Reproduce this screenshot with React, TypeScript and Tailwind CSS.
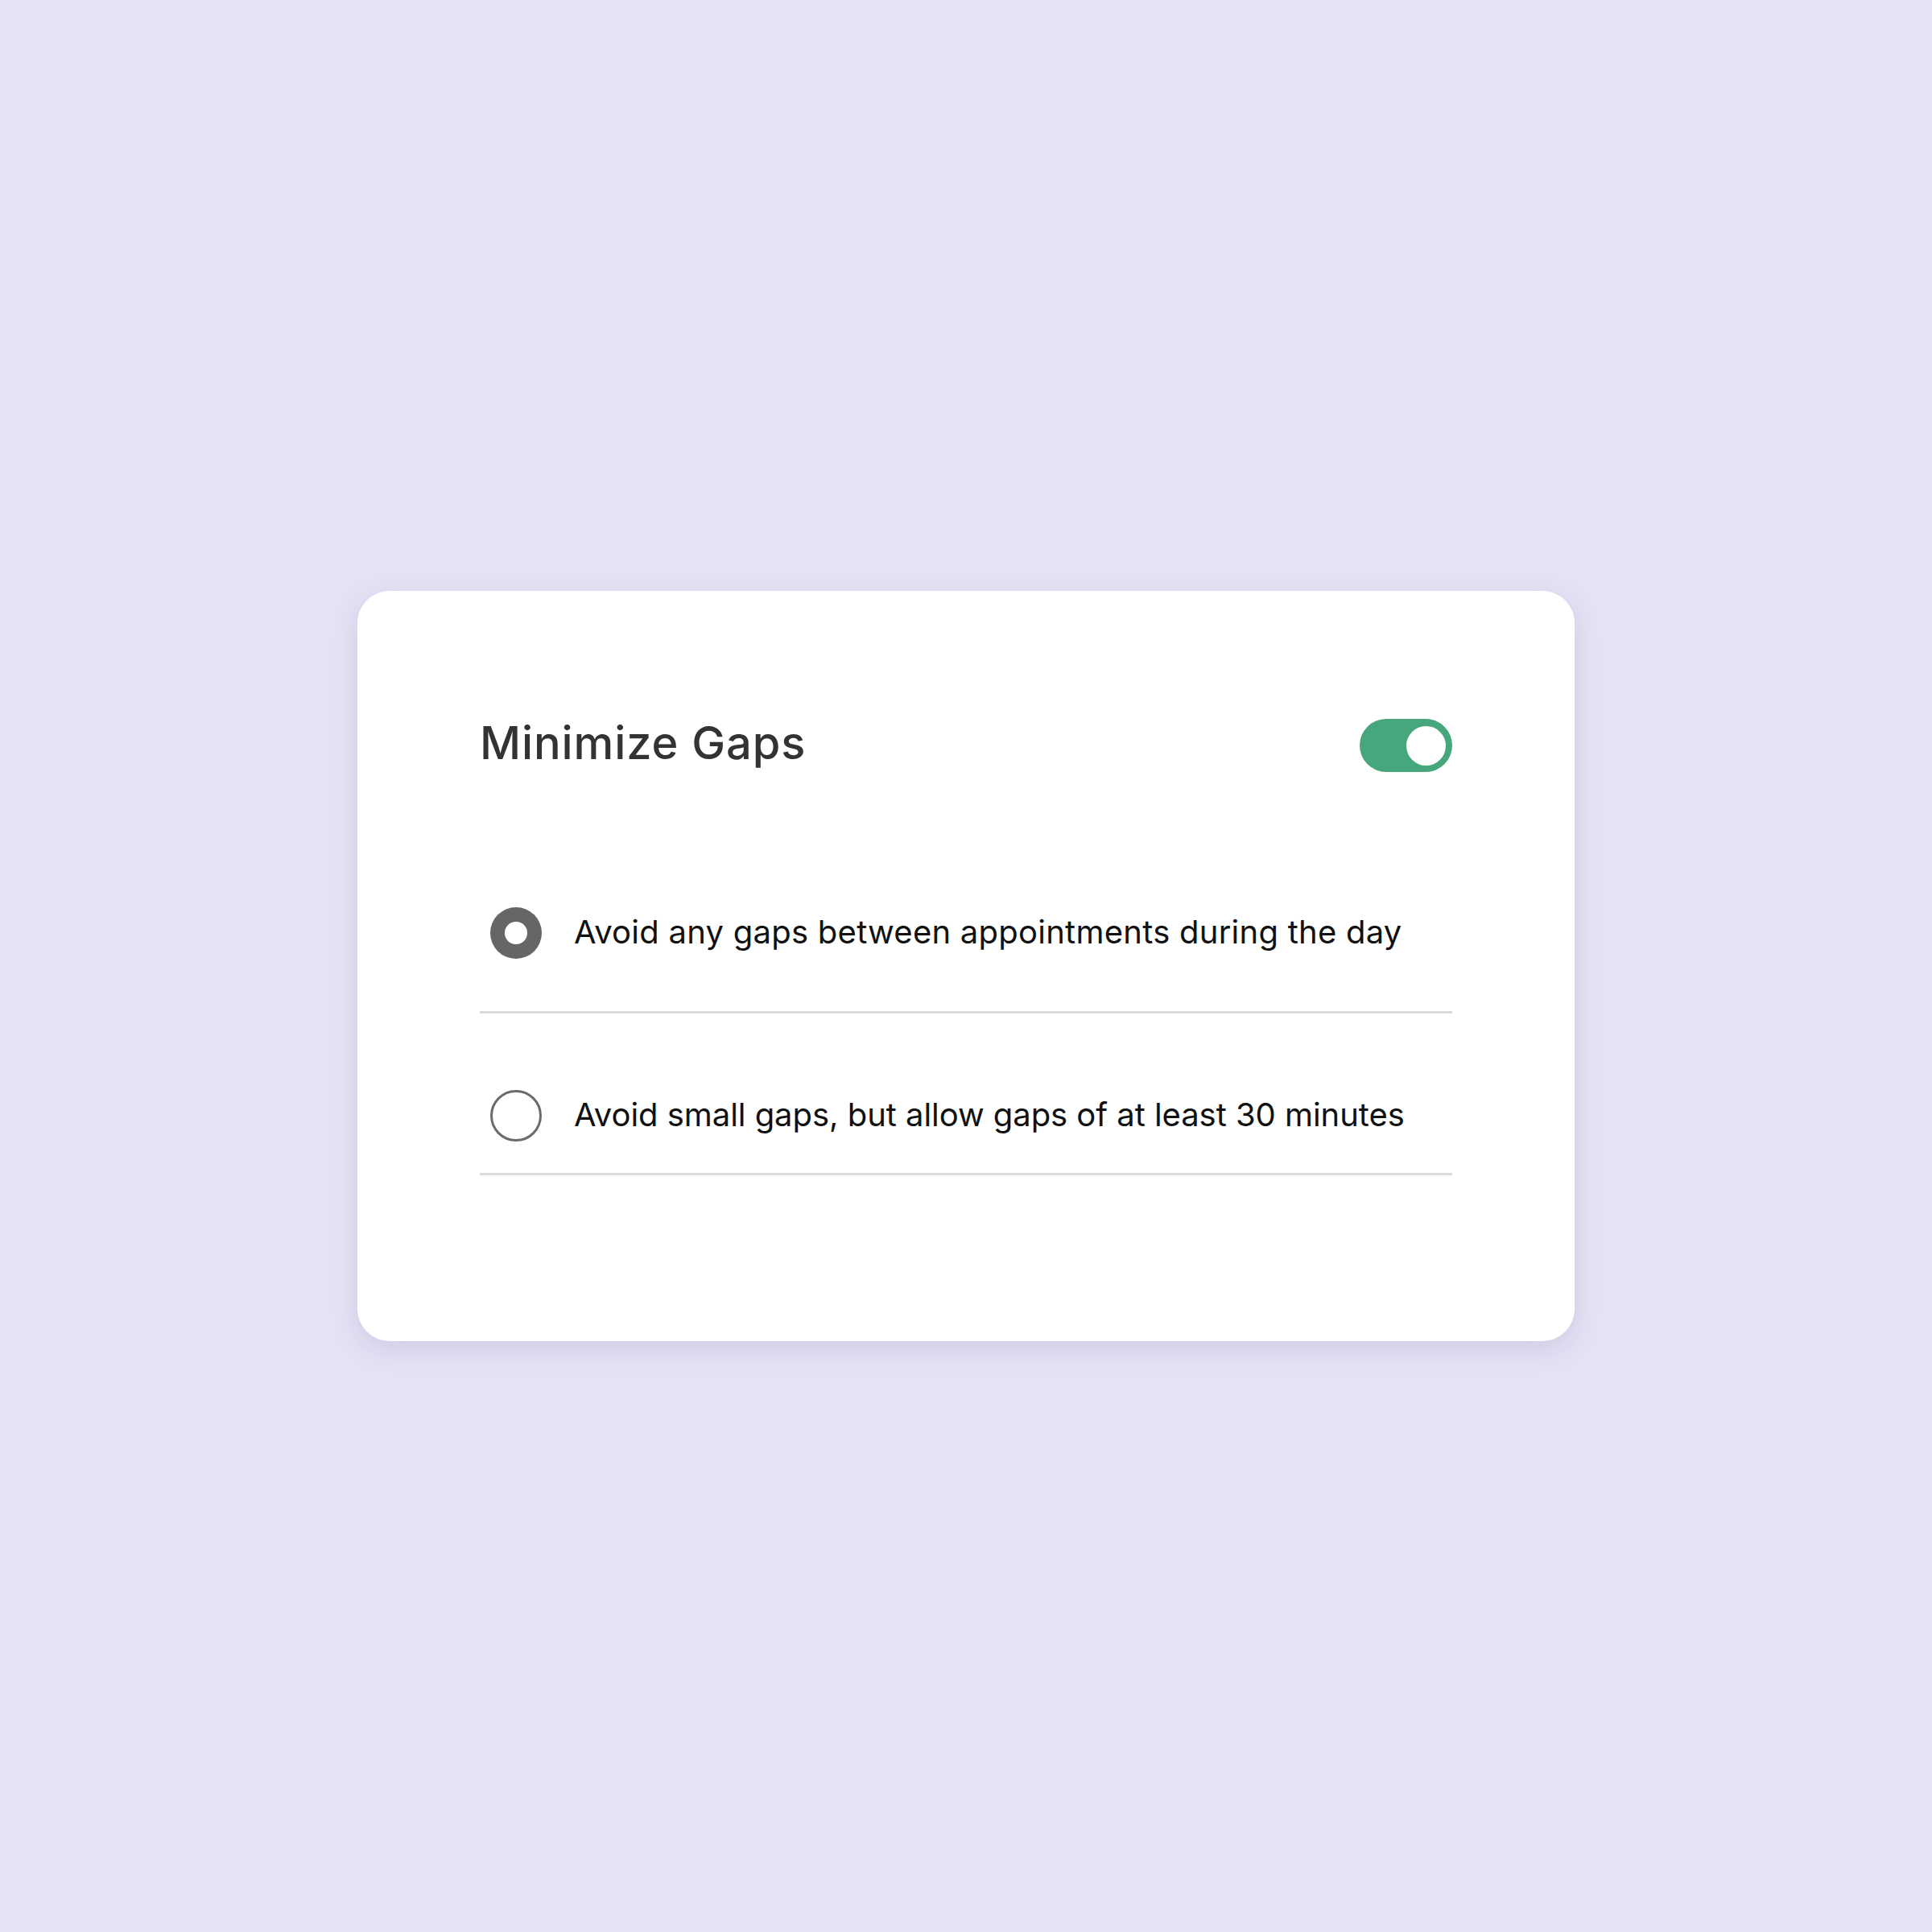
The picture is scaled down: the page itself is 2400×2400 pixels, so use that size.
import React, { useState } from "react";

const font = { fontFamily: "Inter, 'Liberation Sans', sans-serif" };

const options = [
  {
    id: "none",
    label: "Avoid any gaps between appointments during the day",
    rowClass: "pt-[168px] pb-[65px]",
    textClass: "tracking-[0.25px]",
  },
  {
    id: "small",
    label: "Avoid small gaps, but allow gaps of at least 30 minutes",
    rowClass: "pt-[95px] pb-[39px]",
    textClass: "tracking-[-0.05px]",
  },
];

function Radio({ checked }: { checked: boolean }) {
  if (checked) {
    return (
      <div className="ml-[13px] flex h-[64px] w-[64px] shrink-0 items-center justify-center rounded-full bg-[#666666]">
        <div className="h-[28px] w-[28px] rounded-full bg-white" />
      </div>
    );
  }
  return (
    <div className="ml-[13px] h-[64px] w-[64px] shrink-0 rounded-full border-[3px] border-[#6b6b6b] bg-white" />
  );
}

export default function App() {
  const [enabled, setEnabled] = useState(true);
  const [choice, setChoice] = useState("none");

  return (
    <div
      className="flex h-[2400px] w-[2400px] items-center justify-center bg-[#e4e2f4]"
      style={font}
    >
      <div className="w-[1512px] rounded-[40px] bg-white px-[152px] pt-[159px] pb-[206px] shadow-[0_10px_32px_rgba(70,60,130,0.13)]">
        <div className="flex h-[66px] items-center justify-between">
          <h1 className="pb-[6px] text-[56px] font-medium leading-none tracking-[0.9px] text-[#333333]">
            Minimize Gaps
          </h1>
          <button
            onClick={() => setEnabled(!enabled)}
            className={
              "flex h-[66px] w-[115px] items-center rounded-full px-[8px] " +
              (enabled ? "justify-end bg-[#45a77b]" : "justify-start bg-[#cfcfcf]")
            }
          >
            <span className="h-[49px] w-[49px] rounded-full bg-white" />
          </button>
        </div>

        <div className="flex flex-col">
          {options.map((opt) => (
            <div
              key={opt.id}
              onClick={() => setChoice(opt.id)}
              className={
                "flex cursor-pointer items-center gap-[40px] border-b-[3px] border-[#dadada] " +
                opt.rowClass
              }
            >
              <Radio checked={choice === opt.id} />
              <span
                className={
                  "pb-[3px] text-[40px] leading-none text-[#111111] " + opt.textClass
                }
              >
                {opt.label}
              </span>
            </div>
          ))}
        </div>
      </div>
    </div>
  );
}
